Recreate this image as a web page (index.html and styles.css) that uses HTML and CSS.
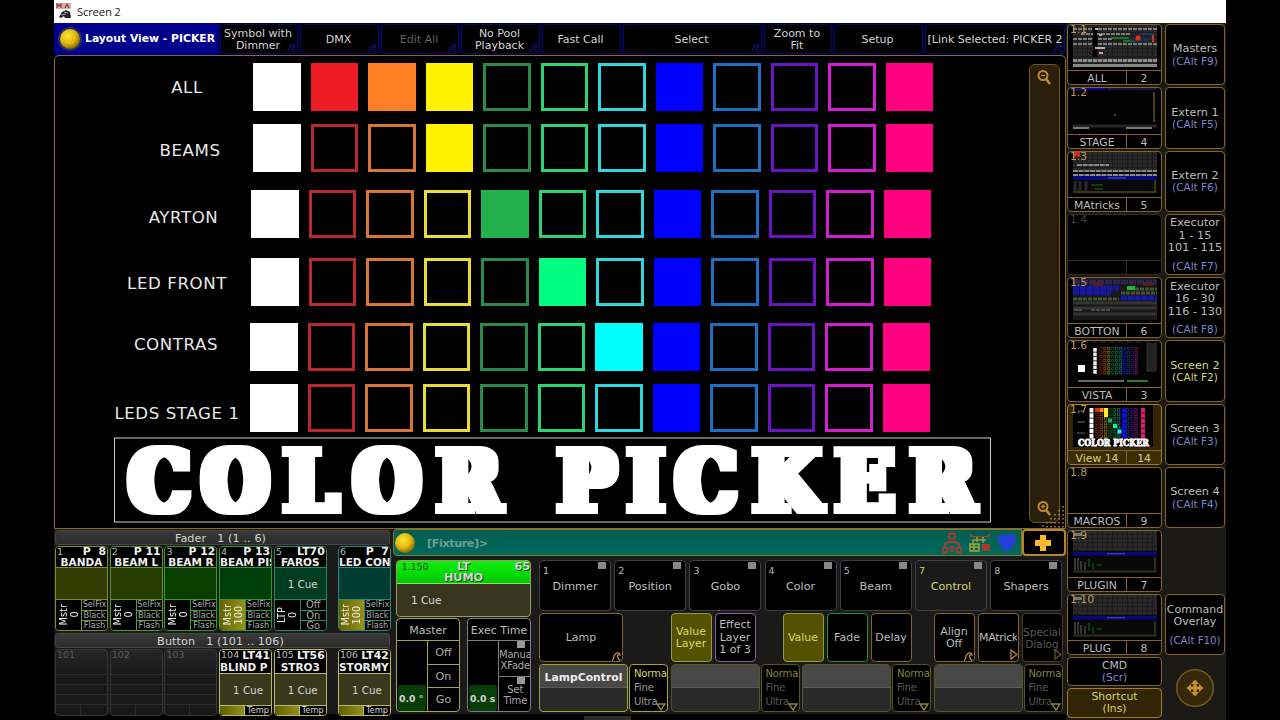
FILE: index.html
```html
<!DOCTYPE html>
<html lang="en">
<head>
<meta charset="utf-8">
<title>Screen 2</title>
<link rel="stylesheet" href="styles.css">
</head>
<body>
<svg class="defs" width="0" height="0">
  <defs>
    <pattern id="dots" width="5" height="4" patternUnits="userSpaceOnUse"><rect width="5" height="4" fill="#1b1b1b"/><rect width="4" height="3" fill="#292929"/></pattern>
    <pattern id="keys" width="5" height="3" patternUnits="userSpaceOnUse"><rect width="4.3" height="3" fill="#8d8d8d"/></pattern>
    <filter id="slab" x="-2%" y="-10%" width="104%" height="120%"><feMorphology operator="dilate" radius="6 3"/></filter>
    <radialGradient id="ball" cx=".4" cy=".35" r=".65"><stop offset="0" stop-color="#ffe52e"/><stop offset=".6" stop-color="#e0b810"/><stop offset="1" stop-color="#8a6a05"/></radialGradient>
    <symbol id="hook" viewBox="0 0 10 9"><path d="M1 8.500C3 8 2 5 4 2.500C6 0 9 1 9 3C8 2 6 3 6.500 5C7 6.500 7.500 8 9.500 8.500" fill="none" stroke="currentColor" stroke-width="1.300"/></symbol>
    <symbol id="plugin" viewBox="0 0 84 42"><rect width="84" height="42" fill="#080808"/><rect width="84" height="20" fill="url(#dots)"/><rect x="1" y="2" width="8" height="3" fill="#777"/><rect y="21" width="84" height="3.500" fill="#08087c"/><rect x="34" y="22.300" width="18" height="1" fill="#5555b0"/><path d="M2 27v12M5 27v12M8 30v9M12 31v8" stroke="#333" stroke-width="2"/><path d="M16 28v8M20 32v6M24 34h5" stroke="#0a3d10" stroke-width="2"/><path d="M0 40.500h84M82 26v14" stroke="#2d2d1a" stroke-width="2"/></symbol>
    <symbol id="columns" viewBox="0 0 44 31"><g fill="none" stroke-width="3.400" stroke-dasharray="3.700 .7"><path d="M2 0v31" stroke="#5e1616"/><path d="M6.300 0v31" stroke="#69380f"/><path d="M10.600 0v31" stroke="#66601a"/><path d="M15 0v31" stroke="#12441f"/><path d="M19.300 0v31" stroke="#0d5a30"/><path d="M23.600 0v31" stroke="#12595a"/><path d="M28 0v31" stroke="#0a0a86"/><path d="M32.300 0v31" stroke="#0d2e55"/><path d="M36.600 0v31" stroke="#2f0c58"/><path d="M41 0v31" stroke="#5c1059"/></g><g stroke="#000" stroke-width="1.300" stroke-dasharray="1.600 2.800" stroke-dashoffset="-1.100"><path d="M2 0v31M6.300 0v31M10.600 0v31M15 0v31M19.300 0v31M23.600 0v31M32.300 0v31M36.600 0v31M41 0v31"/></g></symbol>
  </defs>
</svg>
<div class="window">
  <header class="titlebar">
    <svg width="16" height="16" viewBox="0 0 16 16"><path d="M0 0h15v6H0z" fill="#c9b3aa"/><path d="M1 5V1l2 2 2-2v4M9 5l2-4 2 4" fill="none" stroke="#a33" stroke-width="1.300"/><path d="M3 14l3-5 4-2 4 2 1 6h-6l-1-2-3 2z" fill="#222"/><path d="M5 12l5-1M8 9l4 1" stroke="#aaa"/></svg>
    <span>Screen 2</span>
  </header>
  <div class="desk">
    <main class="main">
      <nav class="toolbar">
        <div class="tool-title"><svg width="28" height="28" viewBox="0 0 28 28"><circle cx="14" cy="14" r="12" fill="#565a44" opacity=".5"/><circle cx="14" cy="14" r="10" fill="url(#ball)"/></svg><b>Layout View - PICKER</b></div>
        <div class="tool">Symbol with<br>Dimmer<svg class="hook"><use href="#hook"/></svg></div>
        <div class="tool">DMX<svg class="hook"><use href="#hook"/></svg></div>
        <div class="tool off">Edit All<svg class="hook"><use href="#hook"/></svg></div>
        <div class="tool">No Pool<br>Playback<svg class="hook"><use href="#hook"/></svg></div>
        <div class="tool">Fast Call</div>
        <div class="tool">Select<svg class="hook"><use href="#hook"/></svg></div>
        <div class="tool">Zoom to<br>Fit</div>
        <div class="tool">Setup</div>
        <div class="tool link">[Link Selected: PICKER 2<svg class="hook"><use href="#hook"/></svg></div>
      </nav>
      <section class="canvas">
        <div class="picker">
          <div class="prow r1"><span class="plabel">ALL</span><div class="swatches"><i class="white on"></i><i class="red on"></i><i class="orange on"></i><i class="yellow on"></i><i class="green"></i><i class="mint"></i><i class="cyan"></i><i class="blue on"></i><i class="sky"></i><i class="violet"></i><i class="magenta"></i><i class="pink on"></i></div></div>
          <div class="prow r2"><span class="plabel">BEAMS</span><div class="swatches"><i class="white on"></i><i class="red"></i><i class="orange"></i><i class="yellow on"></i><i class="green"></i><i class="mint"></i><i class="cyan"></i><i class="blue on"></i><i class="sky"></i><i class="violet"></i><i class="magenta"></i><i class="pink on"></i></div></div>
          <div class="prow r3"><span class="plabel">AYRTON</span><div class="swatches"><i class="white on"></i><i class="red"></i><i class="orange"></i><i class="yellow"></i><i class="green on"></i><i class="mint"></i><i class="cyan"></i><i class="blue on"></i><i class="sky"></i><i class="violet"></i><i class="magenta"></i><i class="pink on"></i></div></div>
          <div class="prow r4"><span class="plabel">LED FRONT</span><div class="swatches"><i class="white on"></i><i class="red"></i><i class="orange"></i><i class="yellow"></i><i class="green"></i><i class="mint on"></i><i class="cyan"></i><i class="blue on"></i><i class="sky"></i><i class="violet"></i><i class="magenta"></i><i class="pink on"></i></div></div>
          <div class="prow r5"><span class="plabel">CONTRAS</span><div class="swatches"><i class="white on"></i><i class="red"></i><i class="orange"></i><i class="yellow"></i><i class="green"></i><i class="mint"></i><i class="cyan on"></i><i class="blue on"></i><i class="sky"></i><i class="violet"></i><i class="magenta"></i><i class="pink on"></i></div></div>
          <div class="prow r6"><span class="plabel">LEDS STAGE 1</span><div class="swatches"><i class="white on"></i><i class="red"></i><i class="orange"></i><i class="yellow"></i><i class="green"></i><i class="mint"></i><i class="cyan"></i><i class="blue on"></i><i class="sky"></i><i class="violet"></i><i class="magenta"></i><i class="pink on"></i></div></div>
          <svg class="banner" width="877" height="86" viewBox="114 437 877 86"><rect x="114.500" y="438" width="876" height="84" fill="none" stroke="#ccc"/><g filter="url(#slab)"><text class="banner-text" transform="scale(.9 1)" y="511.500" x="177 261.700 345.500 430 521 585 652 717.800 784.500 874 961 1047.500">COLOR PICKER</text></g></svg>
        </div>
        <div class="zoombar">
          <svg width="16" height="17" viewBox="0 0 16 17"><g fill="none" stroke="#c08a2a" stroke-width="2"><circle cx="7" cy="6.500" r="4.500"/><path d="M10 10l4 5" stroke-width="2.600"/><path d="M5 6.500h4" stroke-width="1.300"/></g></svg>
          <svg width="16" height="17" viewBox="0 0 16 17"><g fill="none" stroke="#c08a2a" stroke-width="2"><circle cx="7" cy="6.500" r="4.500"/><path d="M10 10l4 5" stroke-width="2.600"/><path d="M5 6.500h4M7 4.500v4" stroke-width="1.300"/></g></svg>
        </div>
        <svg class="grip" width="23" height="23" viewBox="0 0 23 23"><path d="M21 1v22M17 5v18M13 9v14M9 13v10M5 17v6M1 20v3" stroke="#b98d2c" stroke-width="1.500" stroke-dasharray="1.500 2.500"/></svg>
      </section>
      <section class="bottom">
        <div class="execs">
          <div class="bar">Fader&nbsp;&nbsp; 1 (1 .. 6)</div>
          <div class="cells faders">
            <div class="cell f1"><div class="head"><small>1</small><b>P&nbsp; 8</b><strong>BANDA</strong></div><div class="body"></div><div class="foot"><div class="mst"><span>Mstr<br>0</span></div><div class="keys"><span>SelFix</span><span>Black</span><span>Flash</span></div></div></div>
            <div class="cell f2"><div class="head"><small>2</small><b>P 11</b><strong>BEAM L</strong></div><div class="body"></div><div class="foot"><div class="mst"><span>Mstr<br>0</span></div><div class="keys"><span>SelFix</span><span>Black</span><span>Flash</span></div></div></div>
            <div class="cell f3"><div class="head"><small>3</small><b>P 12</b><strong>BEAM R</strong></div><div class="body"></div><div class="foot"><div class="mst"><span>Mstr<br>0</span></div><div class="keys"><span>SelFix</span><span>Black</span><span>Flash</span></div></div></div>
            <div class="cell f4"><div class="head"><small>4</small><b>P 13</b><strong class="cut">BEAM PIS</strong></div><div class="body"></div><div class="foot"><div class="mst full"><span>Mstr<br>100</span></div><div class="keys"><span>SelFix</span><span>Black</span><span>Flash</span></div></div></div>
            <div class="cell f5"><div class="head"><small>5</small><b>LT70</b><strong>FAROS</strong></div><div class="body">1 Cue</div><div class="foot"><div class="mst"><span>LTP<br>0</span></div><div class="keys wide"><span>Off</span><span>On</span><span>Go</span></div></div></div>
            <div class="cell f6"><div class="head"><small>6</small><b>P&nbsp; 7</b><strong class="cut">LED CON</strong></div><div class="body"></div><div class="foot"><div class="mst full"><span>Mstr<br>100</span></div><div class="keys"><span>SelFix</span><span>Black</span><span>Flash</span></div></div></div>
          </div>
          <div class="bar">Button&nbsp;&nbsp; 1 (101 .. 106)</div>
          <div class="cells buttons">
            <div class="cell empty"><small>101</small><hr><hr><hr><p></p></div>
            <div class="cell empty"><small>102</small><hr><hr><hr><p></p></div>
            <div class="cell empty"><small>103</small><hr><hr><hr><p></p></div>
            <div class="cell cue"><div class="head"><small>104</small><b>LT41</b><strong class="cut">BLIND P</strong></div><div class="body">1 Cue</div><div class="temp"><i></i><span>Temp</span></div></div>
            <div class="cell cue"><div class="head"><small>105</small><b>LT56</b><strong>STRO3</strong></div><div class="body">1 Cue</div><div class="temp"><i></i><span>Temp</span></div></div>
            <div class="cell cue"><div class="head"><small>106</small><b>LT42</b><strong class="cut">STORMY</strong></div><div class="body">1 Cue</div><div class="temp"><i></i><span>Temp</span></div></div>
          </div>
        </div>
        <div class="control">
          <div class="cmd">
            <div class="cmdline"><svg width="22" height="22" viewBox="0 0 22 22"><circle cx="11" cy="11" r="10" fill="url(#ball)"/></svg><span>[Fixture]&gt;</span>
              <div class="status">
                <svg width="22" height="22" viewBox="0 0 22 22"><g fill="none" stroke="#a43e35" stroke-width="1.800"><rect x="8" y="1.500" width="6" height="5"/><path d="M11 7v4M4 15v-3l3-2h8l3 2v3"/><circle cx="4" cy="18" r="2.500"/><circle cx="11" cy="17" r="2"/><circle cx="18" cy="18" r="2.500"/></g></svg>
                <svg width="22" height="22" viewBox="0 0 22 22"><path d="M1 2l4 2h12l4-2v3H1z" fill="#b5382c"/><path d="M8 5v5M14 5v6M4 11V8h13" fill="none" stroke="#9ba02f" stroke-width="1.500"/><path d="M1 12h9v7H1zM1 15h9M5 12v7" fill="none" stroke="#a8a233" stroke-width="1.500"/><path d="M13 12h8v7h-8z" fill="#a53a32"/></svg>
                <svg width="20" height="22" viewBox="0 0 20 22"><path d="M10 20C5 16 1 12 1 6C1.500 2.500 6 1 10 3.500C14 1 18.500 2.500 19 6C19 12 15 16 10 20Z" fill="#2540d8"/></svg>
              </div>
            </div>
            <div class="plus"><svg width="18" height="18" viewBox="0 0 18 18"><path d="M6 1h6v5h5v6h-5v5H6v-5H1V6h5z" fill="#ffb92c"/></svg></div>
          </div>
          <div class="work">
            <div class="left">
              <div class="humo"><div class="humo-head"><span>1.150</span><b>LT<br>HUMO</b><b>65</b></div><div class="humo-body">1 Cue</div></div>
              <div class="masters">
                <div class="fader lime"><h4>Master</h4><div class="split"><div class="track"><b>0.0 °</b></div><div class="col"><span>Off</span><span>On</span><span>Go</span></div></div></div>
                <div class="fader grey"><h4>Exec Time</h4><div class="split"><div class="track"><b>0.0 s</b></div><div class="col two"><span>Manua<br>XFade</span><span>Set<br>Time</span></div></div></div>
              </div>
            </div>
            <div class="right">
              <div class="presets">
                <div><small>1</small>Dimmer</div><div><small>2</small>Position</div><div><small>3</small>Gobo</div><div><small>4</small>Color</div><div><small>5</small>Beam</div><div class="active"><small>7</small>Control</div><div><small>8</small>Shapers</div>
              </div>
              <div class="layers">
                <div class="k lamp">Lamp<svg class="hook"><use href="#hook"/></svg></div>
                <div class="k sel vl">Value<br>Layer</div><div class="k purple">Effect<br>Layer<br>1 of 3</div>
                <div class="k sel val">Value</div><div class="k lit-green">Fade</div><div class="k">Delay</div>
                <div class="k align">Align<br>Off<svg class="hook"><use href="#hook"/></svg></div><div class="k matricks"><span>MAtrick</span><svg class="tri" viewBox="0 0 8 11"><path d="M1 1l6 4.500L1 10z"/></svg></div><div class="k dim">Special<br>Dialog<svg class="tri" viewBox="0 0 8 11"><path d="M1 1l6 4.500L1 10z"/></svg></div>
              </div>
              <div class="encoders">
                <div class="enc live"><b>LampControl</b></div><div class="res live"><em>Norma</em><span>Fine</span><span>Ultra</span><svg viewBox="0 0 10 8"><path d="M1 1h8L5 7z"/></svg></div>
                <div class="enc"><b></b></div><div class="res"><em>Norma</em><span>Fine</span><span>Ultra</span><svg viewBox="0 0 10 8"><path d="M1 1h8L5 7z"/></svg></div>
                <div class="enc"><b></b></div><div class="res"><em>Norma</em><span>Fine</span><span>Ultra</span><svg viewBox="0 0 10 8"><path d="M1 1h8L5 7z"/></svg></div>
                <div class="enc"><b></b></div><div class="res"><em>Norma</em><span>Fine</span><span>Ultra</span><svg viewBox="0 0 10 8"><path d="M1 1h8L5 7z"/></svg></div>
              </div>
            </div>
          </div>
        </div>
      </section>
      <div class="edge"><i></i></div>
    </main>
    <aside class="side">
      <div class="views">
        <div class="view"><svg viewBox="0 0 84 42"><rect width="84" height="42" fill="#222"/><rect y="1" width="84" height="31" fill="url(#dots)"/><path d="M0 4h84M8 9h50M0 14h40M0 19h84" stroke="#7c7c7c" stroke-width="2" stroke-dasharray="4 1"/><path d="M22 2v30" stroke="#000" stroke-width="4"/><path d="M22 4h3M26 10h3M22 23h10M26 28h4" stroke="#c4aaa8" stroke-width="2"/><path d="M38 13h18M50 16h12" stroke="#147822" stroke-width="2"/><path d="M57 15h19M68 9h12" stroke="#19345f" stroke-width="2"/><circle cx="65" cy="13" r="2.500" fill="#e33118"/><path d="M80 10v7" stroke="#c33" stroke-width="2"/><rect y="34" width="84" height="3" fill="url(#keys)"/><rect y="39" width="84" height="3" fill="#888"/></svg><small>1.1</small><footer><span>ALL</span><span>2</span></footer></div>
        <div class="view"><svg viewBox="0 0 84 42"><rect width="84" height="42" fill="#020202"/><path d="M0 1h33" stroke="#0a0a88" stroke-width="2.500"/><path d="M34 1h50" stroke="#161640" stroke-width="2"/><path d="M81 4v30" stroke="#4d3b14" stroke-width="2"/><circle cx="42" cy="27" r=".8" fill="#888"/><path d="M0 38h84" stroke="#252525" stroke-width="3"/><path d="M0 40h16M53 40h26" stroke="#777" stroke-width="2"/></svg><small>1.2</small><footer><span>STAGE</span><span>4</span></footer></div>
        <div class="view"><svg viewBox="0 0 84 42"><rect width="84" height="42" fill="#090909"/><rect width="84" height="20" fill="url(#dots)"/><path d="M0 2h7" stroke="#d82918" stroke-width="5"/><path d="M4 13h32M0 19h84M0 23h84" stroke="#888" stroke-width="2" stroke-dasharray="5 .7"/><rect y="24" width="84" height="4" fill="#08087c"/><path d="M35 26h18" stroke="#5959a8"/><path d="M2 29v10M7 29v10M13 29v10" stroke="#292929" stroke-width="3"/><path d="M18 33h12M22 37h8" stroke="#0a3d10" stroke-width="2"/><path d="M0 40h84M82 28v12" stroke="#35351b" stroke-width="2"/></svg><small>1.3</small><footer><span>MAtricks</span><span>5</span></footer></div>
        <div class="view blank"><small>1.4</small><footer><span></span><span></span></footer></div>
        <div class="view"><svg viewBox="0 0 84 42"><rect width="84" height="42" fill="#181818"/><path d="M0 4h84" stroke="#2b2450" stroke-width="5" stroke-dasharray="7 1"/><path d="M0 10h46M0 15h38M48 20h36" stroke="#1616a0" stroke-width="5" stroke-dasharray="6 .8"/><path d="M20 6h10M70 6h10" stroke="#502020" stroke-width="4"/><path d="M54 10h8" stroke="#20b535" stroke-width="4"/><path d="M62 11h22M48 15h36M0 21h46" stroke="#46522e" stroke-width="3" stroke-dasharray="4 1"/><path d="M0 25h84M0 30h84M0 36h84" stroke="#333" stroke-width="3"/><path d="M1 32h8" stroke="#876"/><path d="M18 32h20" stroke="#686" stroke-dasharray="4 1"/></svg><small>1.5</small><footer><span>BOTTON</span><span>6</span></footer></div>
        <div class="view"><svg viewBox="0 0 84 42"><rect width="84" height="42" fill="#020202"/><path d="M0 1h84" stroke="#28233b" stroke-dasharray="6 3"/><rect x="5" y="24" width="7" height="7" fill="#fff"/><path d="M22 7v26" stroke="#eee" stroke-width="3.500" stroke-dasharray="3.700 .7"/><use href="#columns" x="24.500" y="6" width="43" height="28"/><path d="M74 2v28h9V2" fill="#222" stroke="#333"/><path d="M5 40h46" stroke="#666" stroke-width="2"/><path d="M54 40h21" stroke="#287c2b" stroke-width="2"/></svg><small>1.6</small><footer><span>VISTA</span><span>3</span></footer></div>
        <div class="view chosen"><svg viewBox="0 0 84 42"><rect width="80" height="42" fill="#000"/><path d="M5 6h6M4 17h8M4 28h8" stroke="#666"/><path d="M18.500 3v31" stroke="#fff" stroke-width="4" stroke-dasharray="4.500 .7"/><use href="#columns" x="21" y="3" width="46" height="31"/><path d="M22 5h4" stroke="#e22" stroke-width="4"/><path d="M26.500 5h4" stroke="#f80" stroke-width="4"/><path d="M33 3v9" stroke="#fe2" stroke-width="4"/><path d="M35 15.500h4" stroke="#2a5" stroke-width="4"/><path d="M40 21h4" stroke="#0f8" stroke-width="4"/><path d="M44.500 26.500h4" stroke="#0ff" stroke-width="4"/><path d="M51.500 3v31" stroke="#1111d0" stroke-width="4" stroke-dasharray="4.500 .7"/><path d="M70 3v31" stroke="#e81873" stroke-width="4" stroke-dasharray="4.500 .7"/><text class="mini" x="5" y="41" textLength="71" lengthAdjust="spacingAndGlyphs">COLOR PICKER</text></svg><small>1.7</small><footer><span>View 14</span><span>14</span></footer></div>
        <div class="view"><small>1.8</small><footer><span>MACROS</span><span>9</span></footer></div>
        <div class="view"><svg><use href="#plugin"/></svg><small>1.9</small><footer><span>PLUGIN</span><span>7</span></footer></div>
        <div class="view"><svg><use href="#plugin"/></svg><small>1.10</small><footer><span>PLUG</span><span>8</span></footer></div>
        <div class="short">CMD<br><em>(Scr)</em></div>
        <div class="short chosen">Shortcut<br>(Ins)</div>
      </div>
      <div class="screens">
        <div>Masters<em>(CAlt F9)</em></div>
        <div>Extern 1<em>(CAlt F5)</em></div>
        <div>Extern 2<em>(CAlt F6)</em></div>
        <div class="tall">Executor<br>1 - 15<br>101 - 115<em>(CAlt F7)</em></div>
        <div class="tall">Executor<br>16 - 30<br>116 - 130<em>(CAlt F8)</em></div>
        <div class="current">Screen 2<em>(CAlt F2)</em></div>
        <div>Screen 3<em>(CAlt F3)</em></div>
        <div>Screen 4<em>(CAlt F4)</em></div>
        <div class="none"></div>
        <div class="cmdo">Command<br>Overlay<em>(CAlt F10)</em></div>
        <div class="move"><svg width="40" height="40" viewBox="0 0 40 40"><circle cx="20" cy="20" r="18.300" fill="#35270a" stroke="#74571b" stroke-width="1.500"/><path d="M20 11.500l4 4.500h-2.500v2.500H24V16l4.500 4-4.500 4v-2.500h-2.500V24H24L20 28.500 16 24h2.500v-2.500H16V24l-4.500-4 4.500-4v2.500h2.500V16H16z" fill="#c9912c"/></svg></div>
      </div>
    </aside>
  </div>
</div>
</body>
</html>
```
FILE: styles.css
```css
* { box-sizing: border-box; }
body { margin: 0; width: 1280px; height: 720px; overflow: hidden; background: #000; color: #d4d4d4; font: 11.2px/12px "DejaVu Sans", sans-serif; }
em, i { font-style: normal; }
h4, p { margin: 0; }
small { font-size: 9.5px; line-height: 10px; }
.defs { position: absolute; }
.window { width: 1172px; height: 720px; margin-left: 54px; display: flex; flex-direction: column; }
.titlebar { height: 23px; flex: none; background: #fff; color: #222; display: flex; align-items: center; gap: 5px; padding: 0 0 1px 2px; font: 12px "Open Sans", "Noto Sans", sans-serif; }
.titlebar span { font-size: 11.3px; letter-spacing: -.2px; }
.desk { display: flex; flex: 1; min-height: 0; }
.main { width: 1012px; flex: none; display: flex; flex-direction: column; }

.toolbar { height: 32px; flex: none; display: grid; grid-template-columns: 165px 80px 81px 80px 81px 81px 141px 70px 91px 142px; background: #000034; }
.tool-title { background: #00008c; color: #fff; display: flex; align-items: center; gap: 1px; padding-left: 2px; font-size: 10.8px; white-space: nowrap; }
.tool { position: relative; border: 1.5px solid #0b0b5c; border-radius: 4px; margin: 1px; background: #000; display: flex; align-items: center; justify-content: center; text-align: center; white-space: nowrap; font-size: 11px; padding: 1px 2px 0 0; }
.tool.off { color: #606060; }
.tool.link { padding-right: 0; }
.hook { position: absolute; right: 1px; bottom: 0; width: 10px; height: 9px; color: #101078; }

.canvas { height: 474px; flex: none; position: relative; border: 1.5px solid #8b6a2a; border-radius: 5px 5px 0 0; display: flex; background: #000; padding-top: 7px; }
.picker { width: 973px; flex: none; display: grid; grid-template-rows: 61px 66px 68px 65px 61px 53px 86px; }
.prow { display: flex; align-items: flex-start; }
.plabel { flex: none; text-align: center; font-size: 16.6px; line-height: 20px; color: #e8e8e8; letter-spacing: .6px; white-space: nowrap; }
.r1 .plabel { width: 198px; padding: 15px 0 0 66px; }
.r2 .plabel { width: 198px; padding: 17px 0 0 72px; }
.r3 .plabel { width: 196px; padding: 18px 0 0 61px; }
.r4 .plabel { width: 196px; padding: 16px 0 0 48px; }
.r5 .plabel { width: 195px; padding: 12px 0 0 47px; }
.r6 .plabel { width: 195px; padding: 20px 0 0 49px; }
.swatches { display: flex; gap: 10px; }
.swatches i { width: 47.5px; height: 47.5px; border: 3px solid var(--c); }
.swatches .on { background: var(--f, var(--c)); border-color: var(--f, var(--c)); }
.white { --c: #fff; }
.red { --c: #b9282d; --f: #ed1c24; }
.orange { --c: #d67636; --f: #ff7f27; }
.yellow { --c: #e8dc36; --f: #fff200; }
.green { --c: #2c8a4c; --f: #22b14c; }
.mint { --c: #2bd672; --f: #00ff80; }
.cyan { --c: #2cd8dc; --f: #00ffff; }
.blue { --c: #0000ff; }
.sky { --c: #1d6fc4; }
.violet { --c: #6a14c4; }
.magenta { --c: #d41cd0; }
.pink { --c: #ff0080; }
.banner { margin-left: 59px; }
.banner-text { font: bold 84px "DejaVu Serif", serif; fill: #fff; text-anchor: middle; }
.zoombar { width: 31px; height: 459px; margin: 1px 0 0 1px; border: 1.5px solid #75571d; border-radius: 6px; background: #291f0b; display: flex; flex-direction: column; align-items: center; justify-content: space-between; padding: 4px 2px 5px 0; }
.grip { position: absolute; right: 0; bottom: 0; }

.bottom { height: 185px; flex: none; display: flex; background: #1a1a1a; gap: 2px; }
.execs { width: 337px; flex: none; padding: 1px 0 0 1px; }
.bar { height: 15px; margin: 0 1px 1px 0; border: 1px solid #454545; border-radius: 3px; background: linear-gradient(#3a3a3a, #2b2b2b); text-align: center; line-height: 15px; padding-right: 4px; letter-spacing: .1px; }
.cells { display: grid; grid-template-columns: 53px 53px 53px 53px 53px 53px; column-gap: 1.7px; margin-bottom: 2px; }
.cells > :last-child { margin: 0 -9.5px 0 9.5px; }
.cell { overflow: hidden; border: 1.5px solid var(--l); border-radius: 4px; display: flex; flex-direction: column; }
.faders .cell { height: 85px; }
.buttons .cell { height: 67px; }
.f1 { --l: #7d8d2c; --b: #323c00; }
.f2 { --l: #5f962c; --b: #253e00; }
.f3 { --l: #3c9a2c; --b: #0a3e00; }
.f4 { --l: #2c9a35; --b: #003e0a; }
.f5 { --l: #278b5c; --b: #003c22; }
.f6 { --l: #278b7c; --b: #003c32; }
.cue { --l: #b9b96a; --b: #38381d; }
.head { height: 21px; flex: none; background: #000; color: #eee; border-bottom: 1px solid var(--l); display: grid; grid-template-columns: auto 1fr; line-height: 10px; }
.buttons .head { height: 24px; line-height: 11.5px; }
.head small { color: #bbb; padding-left: 1px; }
.head b { text-align: right; font-size: 10.9px; padding-right: 1px; white-space: nowrap; }
.head strong { grid-column: 1 / 3; text-align: center; white-space: nowrap; font-size: 10.5px; }
.head .cut { text-align: left; }
.faders .head .cut { overflow: hidden; }
.body { flex: 1; background: var(--b); text-align: center; display: flex; align-items: center; justify-content: center; padding-left: 5px; font-size: 10.3px; }
.foot { height: 31px; flex: none; display: flex; border-top: 1px solid var(--l); background: #000; }
.mst { width: 25px; flex: none; display: flex; align-items: center; justify-content: center; }
.mst span { writing-mode: vertical-rl; transform: rotate(180deg); font-size: 9.8px; line-height: 11px; text-align: center; white-space: nowrap; color: #eee; }
.mst.full { background: linear-gradient(90deg, #646400, #96921a); }
.keys { flex: 1; display: grid; grid-template-rows: repeat(3, 1fr); border-left: 1px solid var(--l); font-size: 8.2px; line-height: 9px; text-align: center; color: #aaa; overflow: hidden; }
.keys span { overflow: hidden; }
.keys span + span { border-top: 1px solid var(--l); }
.keys.wide { font-size: 9.8px; }
.temp { height: 10px; flex: none; display: flex; border-top: 1px solid var(--l); font-size: 8.3px; line-height: 9px; background: #000; }
.temp i { width: 25px; background: linear-gradient(90deg, #606000, #92901a); border-right: 1px solid var(--l); }
.temp span { flex: 1; text-align: center; }
.empty { --l: #363636; background: linear-gradient(#262626, #191919 40%); color: #0a0a0a; }
.empty small { color: #5a5a5a; height: 24px; padding-left: 1px; }
.empty hr { width: 100%; height: 10px; margin: 0; border: 0; border-top: 1px solid #2c2c2c; }
.empty p { flex: 1; border-top: 1px solid #2c2c2c; background: linear-gradient(90deg, transparent 24px, #2c2c2c 24px, #2c2c2c 25px, transparent 25px); }

.control { flex: 1; min-width: 0; }
.cmd { height: 27px; display: flex; }
.cmdline { flex: 1; border: 1.5px solid #7c7a2c; border-radius: 4px 0 0 4px; background: linear-gradient(#045c50, #006a5d); display: flex; align-items: center; }
.cmdline span { margin-left: 11px; padding-top: 2px; font-weight: bold; font-size: 11.2px; color: #709b91; letter-spacing: -.4px; }
.status { margin-left: auto; display: flex; gap: 6px; padding-right: 4px; }
.plus { width: 44px; border: 2px solid #b5852a; border-radius: 4px; background: #000; display: flex; align-items: center; justify-content: center; padding-right: 3px; }
.work { display: flex; padding: 4px 0 0 3px; }
.left { width: 135px; flex: none; margin-right: 8px; }
.humo { height: 57px; border: 1.5px solid #96a05a; border-radius: 4px; overflow: hidden; background: #38341d; }
.humo-head { height: 23px; border-bottom: 1px solid #9cde60; background: linear-gradient(#10f010, #00c800); display: grid; grid-template-columns: 40px 1fr 40px; text-align: center; line-height: 11px; text-shadow: 1px 1px #075007; }
.humo-head span { color: #064a06; text-shadow: none; font-size: 9.5px; padding-right: 4px; }
.humo-head b:last-child { text-align: right; }
.humo-body { padding: 10px 0 0 14px; font-size: 10.5px; color: #ddd; }
.masters { display: flex; justify-content: space-between; margin-top: 1px; }
.fader { height: 94px; width: 64px; border: 1.5px solid var(--l); border-radius: 4px; background: #000; overflow: hidden; display: flex; flex-direction: column; }
.lime { --l: #a5a54c; }
.grey { --l: #7d7d7d; }
.fader h4 { height: 22px; border-bottom: 1px solid var(--l); font-weight: normal; text-align: center; line-height: 23px; font-size: 11px; white-space: nowrap; color: #bbb; }
.split { flex: 1; display: flex; }
.track { width: 31px; flex: none; border-right: 1px solid var(--l); display: flex; align-items: flex-end; padding: 0 1px; }
.track b { width: 28px; height: 26px; border-radius: 3px; background: #073d07; font-size: 9.3px; line-height: 28px; white-space: nowrap; padding-left: 1px; }
.col { flex: 1; display: flex; flex-direction: column; color: #aaa; }
.col span { flex: 1; display: flex; align-items: center; justify-content: center; text-align: center; line-height: 11px; }
.col span + span { border-top: 1px solid var(--l); }
.two span { font-size: 10px; background: linear-gradient(#999, #999) 18px 0 / 8px 7px no-repeat; padding-top: 3px; letter-spacing: -.2px; }

.presets { display: grid; grid-template-columns: repeat(7, 72px); column-gap: 3.2px; }
.presets div { position: relative; height: 51px; border: 1.5px solid #404044; border-radius: 4px; background: linear-gradient(#888, #888) 58px 1px / 8px 7px no-repeat #000; display: flex; align-items: center; justify-content: center; color: #bbb; padding-top: 2px; }
.presets small { position: absolute; left: 3px; top: 5px; font-size: 9.5px; }
.presets .active { background-color: #1a1a1a; color: #d4d46a; }
.layers { display: flex; gap: 3px; margin-top: 2px; }
.k { position: relative; width: 41px; height: 49px; flex: none; border: 1.5px solid #83632b; border-radius: 4px; background: #000; display: flex; align-items: center; justify-content: center; text-align: center; color: #bbb; line-height: 12.500px; font-size: 11px; white-space: nowrap; padding-top: 1px; }
.k .hook { color: #b98536; }
.k.lamp { width: 84px; }
.k.vl { margin-left: 44.500px; }
.k.sel { background: #545200; border-color: #98983e; color: #d8d868; }
.k.purple { border-color: #8a5c9c; }
.k.val { margin-left: 24px; }
.k.lit-green { border-color: #2c8a3c; }
.k.align { margin-left: 19px; }
.k.dim { color: #575757; border-color: #4c3b1d; font-size: 10.5px; }
.matricks span { width: 38px; overflow: hidden; text-align: left; letter-spacing: -.3px; }
.tri { position: absolute; right: 0; bottom: 1px; width: 8px; height: 11px; fill: none; stroke: #b98536; stroke-width: 1.300; }
.dim .tri { stroke: #6d5328; }
.encoders { display: flex; margin-top: 2px; }
.enc { width: 89px; height: 48px; border: 1.5px solid #55551c; border-radius: 4px; background: #292929; margin-right: 1px; overflow: hidden; }
.enc b { display: block; height: 23px; background: #484848; border-bottom: 1px solid #5a5a5a; text-align: center; line-height: 25px; color: #eee; font-size: 10.8px; }
.res { position: relative; width: 39px; height: 48px; border: 1.5px solid #55551c; border-radius: 4px; background: #000; margin-right: 2.500px; padding: 2px 0 0 4px; color: #585858; font-size: 10.1px; line-height: 14px; display: flex; flex-direction: column; letter-spacing: -.2px; }
.res em { color: #85853c; }
.res svg { position: absolute; right: 1px; bottom: 0; width: 10px; height: 8px; fill: none; stroke: #85853c; stroke-width: 1.400; }
.enc.live, .res.live { border-color: #a5a52c; }
.res.live { color: #999; }
.res.live em { color: #d4d46a; }
.edge { flex: 1; padding: 2px 0 0 530px; }
.edge i { display: block; width: 47px; height: 4px; background: #2b2b2b; }

.side { width: 160px; display: flex; gap: 3px; padding: 1px 1px 4px; background: #1c1a16; }
.views { width: 95px; display: grid; grid-template-rows: repeat(10, 61.300px) 29px 30px; row-gap: 2px; }
.view { position: relative; border: 1.5px solid #83632b; border-radius: 4px; background: #000; overflow: hidden; display: flex; flex-direction: column; align-items: center; }
.view svg { width: 84px; height: 42px; }
.view small { position: absolute; left: 2px; top: 0; font-size: 10.8px; color: #b89a52; }
.view footer { margin-top: auto; align-self: stretch; height: 14px; flex: none; border-top: 1px solid #83632b; display: grid; grid-template-columns: 58px 1fr; text-align: center; line-height: 15px; color: #bbb; font-size: 10.8px; }
.view footer span + span { border-left: 1px solid #83632b; }
.view.blank, .view.blank footer, .view.blank footer span { border-color: #332d22; }
.view.blank small { color: #3c3c3c; }
.view.chosen { background: #322506; border-color: #a87a22; }
.view.chosen footer { color: #d4d46a; background: #3c2d06; }
.mini { font: bold 8.500px "DejaVu Serif", serif; fill: #fff; stroke: #fff; stroke-width: .8px; }
.short { border: 1.5px solid #83632b; border-radius: 4px; background: #000; text-align: center; line-height: 12px; padding-top: 2px; color: #bbb; font-size: 10.8px; }
.short em { color: #8282c8; }
.short.chosen { background: #322506; border-color: #a87a22; color: #d4d46a; }
.screens { width: 60px; display: grid; grid-template-rows: repeat(10, 61.300px) 61px; row-gap: 2px; }
.screens div { border: 1.5px solid #83632b; border-radius: 4px; background: #000; display: flex; flex-direction: column; justify-content: center; text-align: center; white-space: nowrap; color: #bbb; line-height: 12.500px; font-size: 11.3px; padding-top: 1px; }
.screens em { color: #8282c8; font-size: 10.5px; line-height: 11px; }
.screens .tall { padding: 0; }
.screens .tall em { margin-top: 6px; }
.screens .cmdo { font-size: 11px; }
.screens .cmdo em { margin-top: 6px; font-size: 10.2px; }
.screens .current, .screens .current em { color: #d4d46a; }
.screens .none, .screens .move { background: none; border: 0; }
.screens .move { align-items: center; }
```
